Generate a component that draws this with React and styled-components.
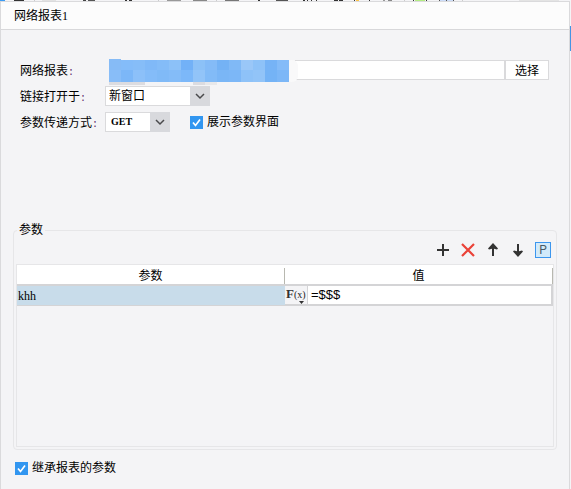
import { useState } from "react";
import styled, { createGlobalStyle } from "styled-components";

const GlobalStyle = createGlobalStyle`
  * {
    box-sizing: border-box;
  }

  body {
    margin: 0;
    background: #f4f4f6;
  }

  body, button, input, select {
    font-family: "Liberation Serif", "Noto Sans CJK SC", sans-serif;
    font-size: 12px;
    line-height: 16px;
    color: #000;
  }
`;

const Page = styled.div`
  display: flex;
  flex-direction: column;
  min-height: 100vh;
`;

const Strip = styled.svg`
  display: block;
  width: 100%;
  height: 1px;
`;

const Main = styled.div`
  display: flex;
  flex: 1;
`;

const Panel = styled.section`
  flex: 1;
  min-width: 0;
  border: 1px solid #dadadc;
  border-bottom: none;
`;

const Edge = styled.div`
  width: 1px;
  padding-top: 25px;
  background: #f4f4f6;

  &::before {
    content: "";
    display: block;
    height: 25px;
    background: #4494e4;
  }
`;

const TitleBar = styled.h1`
  margin: 0;
  height: 28px;
  padding: 6px 13px 4px;
  font-size: 12px;
  font-weight: 400;
  background: #fcfcfc;
  border-bottom: 1px solid #d8d8da;
`;

const Form = styled.form`
  padding: 30px 12px 12px;
`;

const Fields = styled.div`
  display: flex;
  flex-direction: column;
  gap: 6px;
  padding: 0 8px 0 7px;
`;

const Row = styled.div`
  display: flex;
  align-items: center;
  height: 20px;
`;

const Label = styled.label`
  width: 85px;
  flex-shrink: 0;
  padding-top: 4px;

  &::after {
    content: ":";
    font-family: "Liberation Mono", monospace;
    font-size: 10px;
    color: #5c2a6c;
  }
`;

const UrlBox = styled.div`
  position: relative;
  display: flex;
  flex: 1;
  height: 20px;
`;

const UrlInput = styled.input`
  flex: 1;
  min-width: 0;
  padding: 0 4px;
  background: #fff;
  border: 1px solid #dadadc;
  outline: none;
`;

const Mosaic = styled.svg`
  position: absolute;
  left: -8px;
  top: -2px;
`;

const PickButton = styled.button`
  width: 44px;
  padding: 2px 0 0;
  background: #fff;
  border: 1px solid #dadadc;
`;

const SelectBox = styled.div`
  display: grid;
  width: ${(p) => p.$width}px;
  height: 20px;

  > * {
    grid-area: 1 / 1;
  }
`;

const Select = styled.select`
  appearance: none;
  width: 100%;
  padding: 0 20px 0 ${(p) => (p.$latin ? 5 : 3)}px;
  font-size: ${(p) => (p.$latin ? 10 : 12)}px;
  font-weight: ${(p) => (p.$latin ? 700 : 400)};
  background: #fff;
  border: 1px solid #dadadc;
  border-radius: 0;
  outline: none;
`;

const Arrow = styled.svg`
  justify-self: end;
  pointer-events: none;
`;

const Check = styled.label`
  display: flex;
  align-items: center;
  gap: 4px;
  margin-left: ${(p) => p.$indent}px;
`;

const Box = styled.input`
  appearance: none;
  width: 13px;
  height: 13px;
  margin: 0;
  background: #fff;
  border: 1px solid #3296f0;

  &:checked {
    background: #3296f0
      url("data:image/svg+xml,%3Csvg xmlns='http://www.w3.org/2000/svg' viewBox='0 0 11 11'%3E%3Cpath d='M2 5.5l2.5 3L9 2.5' fill='none' stroke='white' stroke-width='1.7'/%3E%3C/svg%3E");
  }
`;

const Group = styled.fieldset`
  min-width: 0;
  margin: 90px 0 10px;
  padding: 0 2px 2px;
  border: 1px solid #e6e6e8;
  border-radius: 4px;
`;

const Legend = styled.legend`
  margin-left: 1px;
  padding: 0 2px;
`;

const Tools = styled.div`
  display: flex;
  justify-content: flex-end;
  gap: 9px;
  height: 26px;
  padding: 4px 3px 0 0;
`;

const Tool = styled.button`
  width: 16px;
  height: 16px;
  padding: 0;
  background: none;
  border: none;

  svg {
    display: block;
  }
`;

const PresetTool = styled(Tool)`
  font-family: Roboto, sans-serif;
  font-size: 12px;
  line-height: 14px;
  color: #4a5a66;
  background: #d2eafa;
  border: 1px solid #3c96ee;
`;

const TableFrame = styled.div`
  height: 183px;
  border: 1px solid #e6e6e8;
`;

const Table = styled.table`
  width: 100%;
  border-collapse: separate;
  border-spacing: 0;
  table-layout: fixed;
`;

const HeadCell = styled.th`
  height: 19px;
  padding: 2px 0 0;
  font-weight: 400;
  background: #fff;

  span {
    display: block;
    border-right: 1px solid #b8b8b0;
  }
`;

const Cell = styled.td`
  height: 22px;
  padding: 0 0 0 ${(p) => (p.$selected ? 1 : 0)}px;
  background: ${(p) => (p.$selected ? "#c8dcea" : "#fff")};
  border-top: 2px solid #d4d4d6;
  border-bottom: ${(p) => (p.$selected ? 1 : 2)}px solid #d4d4d6;
`;

const ValueBox = styled.div`
  display: flex;
  height: 18px;
`;

const FormulaButton = styled.button`
  width: 23px;
  padding: 0;
  background: #f4f4f6;
  border: none;
  border-right: 1px solid #d4d4d6;

  svg {
    display: block;
    overflow: visible;
  }
`;

const ValueInput = styled.input`
  flex: 1;
  min-width: 0;
  padding: 0 3px;
  font-family: "Liberation Sans", sans-serif;
  font-size: 13px;
  border: none;
  border-right: 2px solid #d4d4d6;
  outline: none;
`;

// x, width, colour of the toolbar pixels that show above the dialog
const stripMarks = [
  [0, 5, "#3c9cf4"],
  [14, 10, "#333"],
  [34, 1, "#ccc"],
  [42, 14, "#e2e2e2"],
  [83, 3, "#444"],
  [88, 7, "#555"],
  [125, 2, "#333"],
  [129, 3, "#333"],
  [158, 1, "#ccc"],
  [167, 14, "#999"],
  [193, 14, "#888"],
  [216, 1, "#ccc"],
  [225, 14, "#777"],
  [258, 2, "#333"],
  [276, 12, "#555"],
  [303, 2, "#333"],
  [307, 1, "#333"],
  [311, 1, "#333"],
  [316, 1, "#333"],
  [334, 4, "#333"],
  [339, 4, "#333"],
  [354, 1, "#333"],
  [356, 3, "#fcc44c"],
  [369, 1, "#333"],
  [383, 2, "#999"],
  [388, 4, "#888"],
  [404, 1, "#ccc"],
  [413, 1, "#333"],
  [415, 10, "#b4ec84"],
  [426, 1, "#333"],
  [439, 15, "#ccdcf8"],
  [439, 1, "#555"],
  [446, 1, "#555"],
  [453, 1, "#555"],
  [462, 1, "#ccc"],
  [519, 40, "#e4e4e4"],
];

const mosaicTop = [
  "#86bbf6", "#84bcf9", "#86bdf8", "#80b9f8", "#84bcf8",
  "#8cc1f8", "#72b1f7", "#8cc1f7", "#84bbf7", "#74b2f5",
  "#80b9f6", "#9ac7f8", "#8ec2f8", "#76b3f6", "#84bbf8",
];
const mosaicBottom = [
  "#88bdf8", "#7cb7f8", "#8cc0f9", "#84bcf9", "#80baf7",
  "#84bcf8", "#7cb8f9", "#92c4f8", "#82bbf7", "#7ab6f6",
  "#7cb7f7", "#8ec2f8", "#92c4f8", "#74b3f6", "#7cb7f7",
];

function MosaicBar() {
  return (
    <Mosaic width="202" height="27">
      <rect x="0" y="0" width="198" height="27" fill="#f4f4f6" />
      <rect x="188" y="2" width="13" height="22" rx="6" fill="#f9f9fa" />
      <rect x="12" y="24" width="36" height="3" fill="#dcdce0" />
      <rect x="96" y="24" width="12" height="3" fill="#dcdce0" />
      <rect x="108" y="24" width="12" height="3" fill="#e8e8ea" />
      {mosaicTop.map((fill, i) => (
        <rect key={i} x={12 + i * 12} y={i ? 2 : 1} width="12" height={i ? 10 : 11} fill={fill} />
      ))}
      {mosaicBottom.map((fill, i) => (
        <rect key={i} x={12 + i * 12} y="12" width="12" height="12" fill={fill} />
      ))}
    </Mosaic>
  );
}

function DropArrow() {
  return (
    <Arrow width="20" height="20">
      <rect width="20" height="20" fill="#d8d9dd" />
      <path d="M6 8l4 4 4-4" fill="none" stroke="#4a4a4c" strokeWidth="1.5" />
    </Arrow>
  );
}

export default function App() {
  const [url, setUrl] = useState("");
  const [value, setValue] = useState("=$$$");

  return (
    <Page>
      <GlobalStyle />
      <Strip aria-hidden="true">
        {stripMarks.map(([x, width, fill]) => (
          <rect key={x + fill} x={x} y="0" width={width} height="1" fill={fill} />
        ))}
      </Strip>
      <Main>
        <Panel>
          <TitleBar>网络报表1</TitleBar>
          <Form>
            <Fields>
              <Row>
                <Label htmlFor="url">网络报表</Label>
                <UrlBox>
                  <UrlInput id="url" value={url} onChange={(e) => setUrl(e.target.value)} />
                  <MosaicBar />
                  <PickButton type="button">选择</PickButton>
                </UrlBox>
              </Row>
              <Row>
                <Label htmlFor="target">链接打开于</Label>
                <SelectBox $width={105}>
                  <Select id="target">
                    <option>新窗口</option>
                  </Select>
                  <DropArrow />
                </SelectBox>
              </Row>
              <Row>
                <Label htmlFor="method">参数传递方式</Label>
                <SelectBox $width={65}>
                  <Select id="method" $latin>
                    <option>GET</option>
                  </Select>
                  <DropArrow />
                </SelectBox>
                <Check $indent={20}>
                  <Box type="checkbox" defaultChecked />
                  展示参数界面
                </Check>
              </Row>
            </Fields>

            <Group>
              <Legend>参数</Legend>
              <Tools>
                <Tool type="button" aria-label="添加">
                  <svg width="16" height="16">
                    <path d="M8 2v12M2 8h12" stroke="#333" strokeWidth="2" />
                  </svg>
                </Tool>
                <Tool type="button" aria-label="删除">
                  <svg width="16" height="16">
                    <path d="M2 2l12 12M14 2L2 14" stroke="#ea4238" strokeWidth="2.2" />
                  </svg>
                </Tool>
                <Tool type="button" aria-label="上移">
                  <svg width="16" height="16">
                    <path d="M8 14V4" stroke="#333" strokeWidth="2" />
                    <path d="M8 1l5 5.5-1 1-4-1-4 1-1-1z" fill="#333" />
                  </svg>
                </Tool>
                <Tool type="button" aria-label="下移">
                  <svg width="16" height="16">
                    <path d="M8 2v10" stroke="#333" strokeWidth="2" />
                    <path d="M8 15l5-5.5-1-1-4 1-4-1-1 1z" fill="#333" />
                  </svg>
                </Tool>
                <PresetTool type="button">P</PresetTool>
              </Tools>

              <TableFrame>
                <Table>
                  <thead>
                    <tr>
                      <HeadCell>
                        <span>参数</span>
                      </HeadCell>
                      <HeadCell>
                        <span>值</span>
                      </HeadCell>
                    </tr>
                  </thead>
                  <tbody>
                    <tr>
                      <Cell $selected>khh</Cell>
                      <Cell>
                        <ValueBox>
                          <FormulaButton type="button" aria-label="公式">
                            <svg width="22" height="18">
                              <text x="1" y="12" fontSize="13" fontWeight="700" fill="#333">F</text>
                              <text x="9" y="12" fontSize="10" fontWeight="400" fill="#222">(x)</text>
                              <path d="M14 15h5l-2.5 3z" fill="#333" />
                            </svg>
                          </FormulaButton>
                          <ValueInput
                            aria-label="值"
                            value={value}
                            onChange={(e) => setValue(e.target.value)}
                          />
                        </ValueBox>
                      </Cell>
                    </tr>
                  </tbody>
                </Table>
              </TableFrame>
            </Group>

            <Check $indent={2}>
              <Box type="checkbox" defaultChecked />
              继承报表的参数
            </Check>
          </Form>
        </Panel>
        <Edge />
      </Main>
    </Page>
  );
}
